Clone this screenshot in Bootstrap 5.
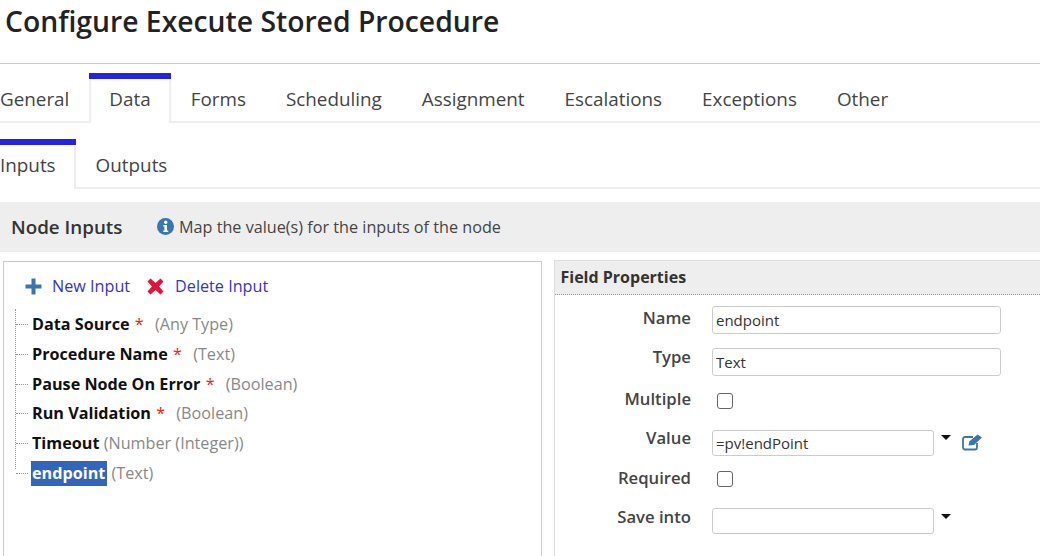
<!DOCTYPE html>
<html lang="en">
<head>
<meta charset="utf-8">
<title>Configure Execute Stored Procedure</title>
<link href="https://cdn.jsdelivr.net/npm/bootstrap@5.3.0/dist/css/bootstrap.min.css" rel="stylesheet">
<style>
html,body{height:556px;overflow:hidden}
body{font-family:"Open Sans",sans-serif;color:#333;background:#fff;font-size:16px}
.dlg-title{font-size:28.300px;font-weight:600;color:#222;height:64px;margin:0;padding:3px 0 0 5px;line-height:36px;border-bottom:1px solid #ccc}
.tabbar{border-bottom:2px solid #eee;height:50px;margin-top:9px;flex-wrap:nowrap}
.tabbar.sub{margin-top:16px}
.tabbar .nav-link{font-size:18.850px;color:#444;padding:11px 20px 0;height:48px;line-height:30px;border:0;border-radius:0;background:none}
.tabbar .nav-item:first-child .nav-link{padding-left:0}
.tabbar .nav-link.active{height:50px;background:#fff;color:#444;padding-left:20px;padding-right:20px;box-shadow:inset 0 6px 0 #2323e6,inset 2px 0 0 #eee,inset -2px 0 0 #eee;position:relative}
.tabbar .nav-item:first-child .nav-link.active{padding-left:0;box-shadow:inset 0 6px 0 #2323e6,inset -2px 0 0 #eee}
.node-head{background:#eee;height:50px;margin-top:13px;padding-left:11px}
.node-head h2{font-size:18.800px;font-weight:600;color:#333;margin:0;width:146px}
.node-hint{font-size:16.200px;color:#444;gap:5px}
.work{margin-top:9px;gap:12px}
.tree-pane{width:539px;margin-left:3px;height:300px;border:1px solid #ccc;border-bottom:0;padding:12px 0 0 21px;flex:none}
.act-link{color:#3333cc;text-decoration:none;font-size:16.200px}
.ic-plus{margin-right:10px}
.ic-del{margin:0 11px 0 17px}
.tree{list-style:none;margin:13px 0 0 -10px;padding:0;position:relative}
.tree::before{content:"";position:absolute;left:0;top:-2px;height:160px;border-left:1px dotted #999}
.tree li{height:29.700px;line-height:26px;padding-left:17px;font-size:16.200px;white-space:nowrap;position:relative;color:#888}
.tree li::before{content:"";position:absolute;left:1px;top:13px;width:12px;border-top:1px dotted #999}
.tree b{color:#111;font-weight:700}
.tree i{color:#e22;font-style:normal;margin:0 7px 0 1px}
.tree .sel{background:#3366bb;color:#fff;padding:0 2px 0 1px;margin-left:-1px;display:inline-block;line-height:25px}
.prop-pane{flex:1;border:1px solid #ddd;border-right:0;border-bottom:0;height:300px;margin-top:-1px}
.prop-head{background:#eee;height:34px;line-height:33px;padding-left:5.500px;font-weight:700;font-size:16px;color:#333;border-bottom:1px dotted #999}
.prop-body{padding-top:11px}
.prop-row{height:28px}
.prop-row label{width:136px;text-align:right;font-weight:600;font-size:16.700px;color:#444;margin-right:21px;white-space:nowrap}
.r-name label{padding-bottom:4px}
.r-type{margin-top:14px}
.r-type label{padding-bottom:10px}
.r-mult{margin-top:10.500px}
.r-mult label{padding-bottom:3px}
.r-val{margin-top:14px}
.r-val label{padding-bottom:9px}
.r-req{margin-top:8px}
.r-req label{padding-bottom:1px}
.r-save{margin-top:14.500px}
.r-save label{padding-bottom:8px}
.fld{height:28px;border:1px solid #ccc;border-radius:3px;font-size:15px;color:#333;padding:0 3px;width:289px;font-family:"Open Sans",sans-serif;background:#fff}
.fld.short{width:222px;height:26px}
.chk{width:16px;height:16px;border:1px solid #666;border-radius:3px;margin-left:5px;appearance:none;background:#fff}
.caret-dn{width:0;height:0;border-left:5px solid transparent;border-right:5px solid transparent;border-top:5px solid #111;margin:-10px 0 0 7px}
.edit-ic{margin-left:11px}
</style>
</head>
<body>
<h1 class="dlg-title">Configure Execute Stored Procedure</h1>
<ul class="nav tabbar">
<li class="nav-item"><a class="nav-link" href="#">General</a></li>
<li class="nav-item"><a class="nav-link active" href="#">Data</a></li>
<li class="nav-item"><a class="nav-link" href="#">Forms</a></li>
<li class="nav-item"><a class="nav-link" href="#">Scheduling</a></li>
<li class="nav-item"><a class="nav-link" href="#">Assignment</a></li>
<li class="nav-item"><a class="nav-link" href="#">Escalations</a></li>
<li class="nav-item"><a class="nav-link" href="#">Exceptions</a></li>
<li class="nav-item"><a class="nav-link" href="#">Other</a></li>
</ul>
<ul class="nav tabbar sub">
<li class="nav-item"><a class="nav-link active" href="#">Inputs</a></li>
<li class="nav-item"><a class="nav-link" href="#">Outputs</a></li>
</ul>
<div class="node-head d-flex align-items-center">
<h2>Node Inputs</h2>
<div class="node-hint d-flex align-items-center">
<svg width="17" height="17" viewBox="0 0 17 17"><circle cx="8.500" cy="8.500" r="8.500" fill="#3a75ad"/><circle cx="8.700" cy="4.300" r="1.700" fill="#fff"/><path d="M6.300 7h3.700v5.600h1.200v1.400H6.200v-1.400h1.200V8.400H6.300z" fill="#fff"/></svg>
<span>Map the value(s) for the inputs of the node</span>
</div>
</div>
<div class="work d-flex">
<div class="tree-pane">
<div class="d-flex align-items-center">
<svg class="ic-plus" width="17" height="17" viewBox="0 0 17 17"><path d="M6.500 0.500h4v6h6v4h-6v6h-4v-6h-6v-4h6z" fill="#3a75ad"/></svg>
<a class="act-link" href="#">New Input</a>
<svg class="ic-del" width="17" height="17" viewBox="0 0 17 17"><path d="M3.500 0.500L8.500 5l5-4.500 3 3L12 8.500l4.500 5-3 3-5-4.500-5 4.500-3-3L5 8.500.5 3.500z" fill="#e0143c"/></svg>
<a class="act-link" href="#">Delete Input</a>
</div>
<ul class="tree">
<li><b>Data Source</b> <i>*</i> (Any Type)</li>
<li><b>Procedure Name</b> <i>*</i> (Text)</li>
<li><b>Pause Node On Error</b> <i>*</i> (Boolean)</li>
<li><b>Run Validation</b> <i>*</i> (Boolean)</li>
<li><b>Timeout</b> (Number (Integer))</li>
<li><b class="sel">endpoint</b> (Text)</li>
</ul>
</div>
<div class="prop-pane">
<div class="prop-head">Field Properties</div>
<div class="prop-body">
<div class="prop-row r-name d-flex align-items-center"><label>Name</label><input class="fld" value="endpoint"></div>
<div class="prop-row r-type d-flex align-items-center"><label>Type</label><input class="fld" value="Text"></div>
<div class="prop-row r-mult d-flex align-items-center"><label>Multiple</label><input type="checkbox" class="chk"></div>
<div class="prop-row r-val d-flex align-items-center"><label>Value</label><input class="fld short" value="=pv!endPoint"><span class="caret-dn"></span>
<svg class="edit-ic" width="21" height="17" viewBox="0 0 21 17"><path d="M15 9v4.500a2 2 0 0 1-2 2H3a2 2 0 0 1-2-2V5a2 2 0 0 1 2-2h8" fill="none" stroke="#3a75ad" stroke-width="1.800"/><path d="M6.500 11.500l.8-4L15.500 .5l4.500 3-8 7.500z" fill="#3a75ad"/></svg></div>
<div class="prop-row r-req d-flex align-items-center"><label>Required</label><input type="checkbox" class="chk"></div>
<div class="prop-row r-save d-flex align-items-center"><label>Save into</label><input class="fld short"><span class="caret-dn"></span></div>
</div>
</div>
</div>
<script src="https://cdn.jsdelivr.net/npm/bootstrap@5.3.0/dist/js/bootstrap.bundle.min.js"></script>
</body>
</html>
